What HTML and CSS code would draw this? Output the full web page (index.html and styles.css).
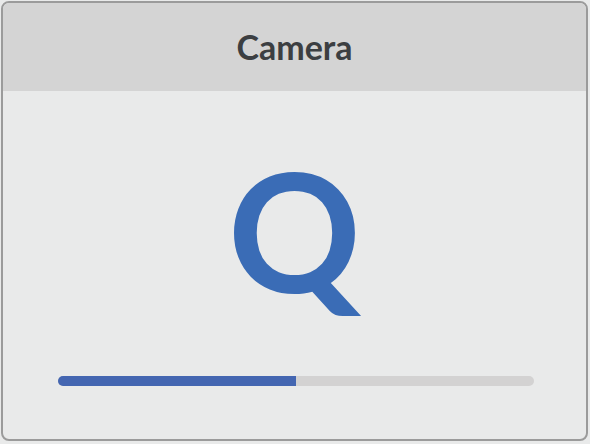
FILE: index.html
```html
<!DOCTYPE html>
<html lang="en">
<head>
    <meta charset="utf-8">
    <title>Camera</title>
    <link rel="stylesheet" href="styles.css">
</head>
<body>

<div class="panel">
    <div class="panel-header">Camera</div>
    <div class="panel-body">
        <div class="letter">Q</div>
        <div class="progress">
            <div class="progress-fill" style="width: 50%"></div>
        </div>
    </div>
</div>

</body>
</html>
```

FILE: styles.css
```css
html, body {
    margin: 0;
    padding: 0;
    height: 100%;
}

body {
    font-family: Lato, "Open Sans", Arial, sans-serif;
    background-color: #e9eaea;
    padding: 1px 2px 3px 1px;
    box-sizing: border-box;
}

.panel {
    height: 100%;
    box-sizing: border-box;
    border: 2px solid #9b9b9b;
    border-radius: 8px;
    overflow: hidden;
    display: flex;
    flex-direction: column;
    background-color: #e9eaea;
}

.panel-header {
    height: 88px;
    flex-shrink: 0;
    display: flex;
    align-items: center;
    justify-content: center;
    background-color: #d4d4d4;
    color: #3c3f42;
    font-size: 34px;
    font-weight: bold;
    line-height: 1;
}

.panel-body {
    display: flex;
    flex-direction: column;
    align-items: center;
    padding-top: 56px;
}

.letter {
    font-size: 165px;
    font-weight: bold;
    line-height: 1;
    color: #3a6cb6;
}

.progress {
    align-self: stretch;
    margin: 64px 52px 0 55px;
    height: 10px;
    border-radius: 5px;
    background-color: #d3d2d2;
    overflow: hidden;
}

.progress-fill {
    height: 100%;
    background-color: #4466b1;
}
```
